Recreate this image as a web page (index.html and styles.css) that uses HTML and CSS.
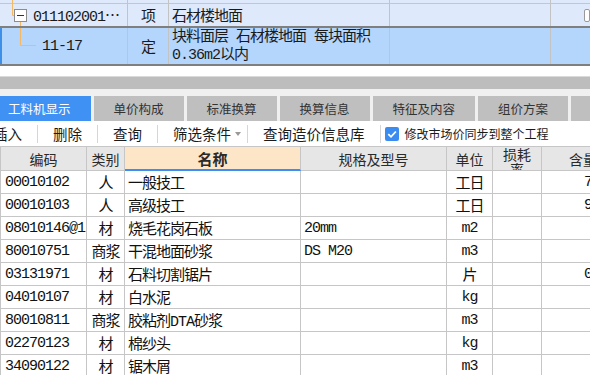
FILE: index.html
```html
<!DOCTYPE html>
<html lang="zh-CN">

<head>
    <meta charset="UTF-8">
    <title>工料机显示</title>
    <link rel="stylesheet" href="styles.css">
</head>

<body>

    <!-- 上方定额树 -->
    <div class="top-grid">
        <svg class="tree-lines" width="40" height="66" viewBox="0 0 40 66">
            <path d="M12.5 0 V15.5 H14" stroke="#f5b864" fill="none" />
            <path d="M20.5 22 V26 M20.5 28 V45.5 H36" stroke="#f5b864" fill="none" />
            <rect x="14.5" y="9.5" width="12" height="12" fill="#fff" stroke="#8c8c8c" />
            <path d="M17 15.5 H24" stroke="#333" />
        </svg>
        <div class="top-row row-stub">
            <div class="cell c1"></div>
            <div class="cell c2"></div>
            <div class="cell c3"></div>
            <div class="cell c4"></div>
            <div class="cell c5"></div>
        </div>
        <div class="top-row row-item">
            <div class="cell c1 code-tree">011102001⋯</div>
            <div class="cell c2 center">项</div>
            <div class="cell c3">石材楼地面</div>
            <div class="cell c4"></div>
            <div class="cell c5"><span class="box"></span></div>
        </div>
        <div class="top-row row-quota">
            <div class="cell c1 code-sub">11-17</div>
            <div class="cell c2 center">定</div>
            <div class="cell c3 two-line">块料面层 石材楼地面 每块面积<br>0.36m2以内</div>
            <div class="cell c4"></div>
            <div class="cell c5"></div>
        </div>
    </div>

    <div class="splitter"></div>

    <!-- 页签 -->
    <div class="tabbar">
        <div class="tab active">工料机显示</div>
        <div class="tab">单价构成</div>
        <div class="tab">标准换算</div>
        <div class="tab">换算信息</div>
        <div class="tab">特征及内容</div>
        <div class="tab">组价方案</div>
        <div class="tab">工程量明细</div>
    </div>

    <!-- 工具栏 -->
    <div class="toolbar">
        <span class="tool">插入</span>
        <span class="sep"></span>
        <span class="tool">删除</span>
        <span class="sep"></span>
        <span class="tool">查询</span>
        <span class="sep"></span>
        <span class="tool filter">筛选条件<i class="caret"></i></span>
        <span class="sep"></span>
        <span class="tool">查询造价信息库</span>
        <span class="sep"></span>
        <label class="sync">
            <svg width="14" height="14" viewBox="0 0 14 14">
                <rect width="14" height="14" rx="2" fill="#3b8cf0" />
                <path d="M3.3 7.2 L6 9.8 L10.9 4.5" fill="none" stroke="#fff" stroke-width="1.8" />
            </svg>
            修改市场价同步到整个工程
        </label>
    </div>

    <!-- 工料机列表 -->
    <div class="grid">
        <div class="grid-row head">
            <div class="hc">编码</div>
            <div class="hc">类别</div>
            <div class="hc name">名称</div>
            <div class="hc">规格及型号</div>
            <div class="hc">单位</div>
            <div class="hc loss">损耗<br>率</div>
            <div class="hc">含量</div>
        </div>
        <div id="rows"></div>
    </div>

    <script>
        var items = [
            ["00010102", "人", "一般技工", "", "工日", "7.135"],
            ["00010103", "人", "高级技工", "", "工日", "9.045"],
            ["08010146@1", "材", "烧毛花岗石板", "20mm", "m2", "1.02"],
            ["80010751", "商浆", "干混地面砂浆", "DS M20", "m3", "0.03"],
            ["03131971", "材", "石料切割锯片", "", "片", "0.042"],
            ["04010107", "材", "白水泥", "", "kg", "0.1"],
            ["80010811", "商浆", "胶粘剂DTA砂浆", "", "m3", "0.01"],
            ["02270123", "材", "棉纱头", "", "kg", "0.01"],
            ["34090122", "材", "锯木屑", "", "m3", "0.01"]
        ];

        var html = "";
        items.forEach(function(it) {
            html += '<div class="grid-row">' +
                '<div class="dc code">' + it[0] + '</div>' +
                '<div class="dc center">' + it[1] + '</div>' +
                '<div class="dc">' + it[2] + '</div>' +
                '<div class="dc">' + it[3] + '</div>' +
                '<div class="dc center">' + it[4] + '</div>' +
                '<div class="dc"></div>' +
                '<div class="dc num">' + it[5] + '</div>' +
                '</div>';
        });
        document.getElementById("rows").innerHTML = html;
    </script>

</body>

</html>
```

FILE: styles.css
```css
* {
    margin: 0;
    padding: 0;
    box-sizing: border-box;
}

html,
body {
    width: 590px;
    height: 375px;
    overflow: hidden;
    background: #fff;
    font-family: "Noto Sans CJK SC", sans-serif;
    color: #222;
}

/* 定额树 */

.top-grid {
    position: relative;
    font: 15px "Liberation Mono", "Noto Sans CJK SC", monospace;
    letter-spacing: -1px;
    color: #1a1a1a;
}

.tree-lines {
    position: absolute;
    left: 0;
    top: 0;
    z-index: 1;
}

.top-row {
    display: flex;
    background: #deeafc;
}

.top-row .cell {
    flex: none;
    display: flex;
    align-items: center;
    border-right: 1px solid #c3c3c3;
    white-space: nowrap;
    overflow: hidden;
}

.c1 {
    width: 128px;
}

.c2 {
    width: 41px;
}

.c3 {
    width: 221px;
    padding-left: 3px;
}

.c4 {
    width: 161px;
}

.top-row .c5 {
    flex: 1;
    border-right: none;
    padding-left: 33px;
}

.center {
    justify-content: center;
}

.row-stub {
    height: 4px;
    border-bottom: 1px solid #c6c6c6;
}

.row-item {
    height: 24px;
    border-bottom: 2px solid #7f7f7f;
}

.row-quota {
    height: 38px;
    background: #b4d5fc;
    border-bottom: 2px solid #7f7f7f;
    box-shadow: inset 2px 0 0 #3f8ee8;
}

.code-tree {
    padding-left: 33px;
}

.code-sub {
    padding-left: 42px;
}

.two-line {
    line-height: 18px;
    padding-top: 1px;
}

.box {
    display: inline-block;
    width: 13px;
    height: 13px;
    background: #fff;
    border: 1px solid #999;
    border-radius: 2px;
}

/* 分隔条 */

.splitter {
    margin-top: 10px;
    height: 13px;
    background: #bdbdbd;
    border-top: 1px solid #dadada;
}

/* 页签 */

.tabbar {
    display: flex;
    gap: 3px;
    margin-left: -12px;
    padding-top: 7px;
    background: #f0f0f0;
    white-space: nowrap;
}

.tab {
    flex: none;
    height: 25px;
    line-height: 25px;
    padding: 0 20px;
    font-size: 12.5px;
    background: #bfbfbf;
    color: #333;
}

.tab.active {
    background: #3f91f4;
    color: #fff;
}

/* 工具栏 */

.toolbar {
    display: flex;
    align-items: center;
    height: 25px;
    margin-left: -22px;
    font-size: 14.5px;
    color: #1a1a1a;
    white-space: nowrap;
}

.tool {
    display: flex;
    align-items: center;
    padding: 0 15px;
}

.tool.filter {
    padding-right: 6px;
}

.caret {
    display: inline-block;
    margin-left: 4px;
    border-left: 3.5px solid transparent;
    border-right: 3.5px solid transparent;
    border-top: 4px solid #999;
}

.sep {
    width: 1px;
    height: 18px;
    background: #d6d6d6;
}

.sync {
    display: flex;
    align-items: center;
    gap: 6px;
    margin-left: 4px;
    font-size: 12px;
}

/* 表格 */

.grid-row {
    display: grid;
    grid-template-columns: 86px 38px 176px 146px 46px 49px 83px;
    border-left: 1px solid #c6c6c6;
}

.hc,
.dc {
    display: flex;
    align-items: center;
    border-right: 1px solid #c6c6c6;
    border-bottom: 1px solid #c6c6c6;
    white-space: nowrap;
    overflow: hidden;
}

.hc {
    height: 25px;
    justify-content: center;
    border-top: 1px solid #c6c6c6;
    background: #e6e6e6;
    font-size: 14px;
    color: #2a2a2a;
}

.hc.name {
    background: #fde6c8;
    border-bottom: 2px solid #3d8ef2;
    font-weight: bold;
    font-size: 15px;
}

.hc.loss {
    align-items: flex-start;
    line-height: 15px;
    white-space: normal;
    text-align: center;
}

.dc {
    height: 23px;
    padding: 0 3px;
    font: 15px "Liberation Mono", "Noto Sans CJK SC", monospace;
    letter-spacing: -1px;
    color: #111;
}

.dc.code {
    padding-left: 4px;
}

.dc.num {
    justify-content: flex-end;
    padding-right: 0;
}
```
